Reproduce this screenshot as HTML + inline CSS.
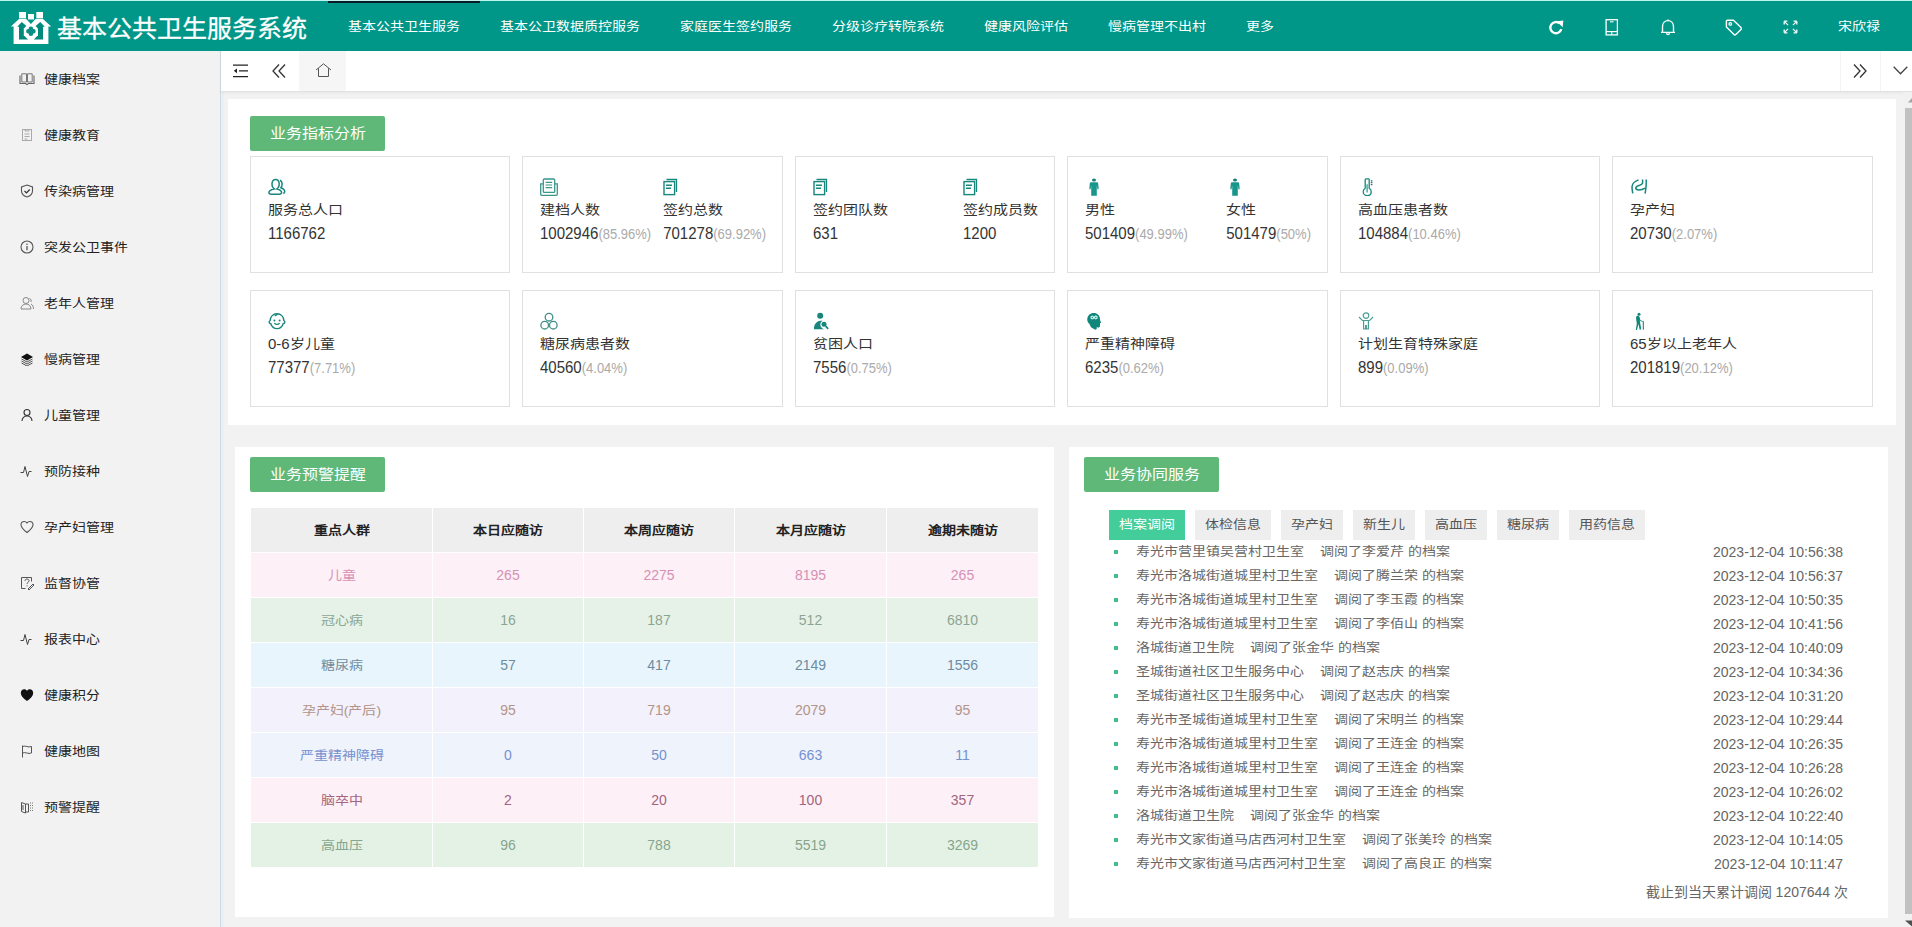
<!DOCTYPE html>
<html lang="zh-CN">
<head>
<meta charset="utf-8">
<style>
*{margin:0;padding:0;box-sizing:border-box}
html,body{width:1912px;height:927px;overflow:hidden;background:#f2f2f2;font-family:"Liberation Sans",sans-serif;color:#333}
.abs{position:absolute}
#hdr{position:absolute;left:0;top:0;width:1912px;height:51px;background:#009688;border-top:1px solid #bff5f0}
#hdr .logo{position:absolute;left:11px;top:9px}
#hdr .title{position:absolute;left:57px;top:11px;font-size:25px;line-height:32px;color:#fff;white-space:nowrap;-webkit-text-stroke:0.3px #fff}
#hdr .nav{position:absolute;left:328px;top:0;height:50px;white-space:nowrap;font-size:14px;color:#fff}
#hdr .nav span{display:inline-block;padding:0 20px;line-height:52px;height:50px;position:relative}
#hdr .nav span.act:before{content:"";position:absolute;left:0;right:0;top:0;height:2px;background:#0a1a25}
#hdr .name{position:absolute;left:1838px;top:16px;font-size:14px;line-height:20px;color:#fff}
#side{position:absolute;left:0;top:51px;width:221px;height:876px;background:#f2f2f2;border-right:1px solid #cfd9de;box-shadow:3px 0 0 #e7f1f7}
#side .it{position:absolute;left:0;width:220px;height:20px;font-size:14px;line-height:20px;color:#222}
#side .it svg{position:absolute;left:20px;top:3px}
#side .it b{position:absolute;left:44px;top:1px;font-weight:normal}
#tabs{position:absolute;left:221px;top:51px;width:1691px;height:41px;background:#fff;border-bottom:1px solid #e2e2e2;box-shadow:0 1px 3px rgba(0,0,0,.05)}
.panel{position:absolute;background:#fff}
.badge{position:absolute;width:135px;height:35px;background:#5fb878;color:#fff;font-size:16px;line-height:35px;text-align:center;border-radius:2px;white-space:nowrap}
.card{position:absolute;width:260px;height:117px;border:1px solid #e0e0e0;background:#fff}
.card .row{position:absolute;left:17px;right:16px;top:21px;display:flex;justify-content:space-between}
.card .col{white-space:nowrap}
.card .ico{height:19px;position:relative}
.card .lbl{font-size:15px;line-height:20px;margin-top:3px;color:#333}
.card .val{font-size:15px;line-height:20px;margin-top:3px;color:#333;transform:translateY(1px) scaleY(1.12);transform-origin:0 65%}
.card .val small{font-size:13px;color:#aaa}
table.t{position:absolute;border-collapse:collapse;table-layout:fixed}
table.t td,table.t th{border:1px solid #fff;text-align:center;font-size:14px;height:45px}
table.t th{background:#eee;color:#222;font-weight:bold;height:45px}
.tabs2{position:absolute;left:1109px;top:510px;white-space:nowrap;font-size:14px}
.tabs2 span{display:inline-block;height:30px;line-height:30px;padding:0 10px;background:#eee;color:#555;margin-right:10px;vertical-align:top}
.tabs2 span.on{background:#42cd9a;color:#fff}
.list{position:absolute;left:1112px;top:540px;width:732px;font-size:14px;color:#666}
.list div{position:relative;height:24px;line-height:24px;padding-left:24px;white-space:nowrap}
.list div:before{content:"";position:absolute;left:2px;top:10px;width:4px;height:4px;background:#3fbf8a}
.list div em{font-style:normal;margin-left:16px}
.list div s{text-decoration:none;position:absolute;right:1px;top:0}
.cj{display:inline-block;transform:scaleY(0.87)}
</style>
</head>
<body>
<div id="hdr">
  <svg class="logo" width="60" height="50" viewBox="0 0 60 50" style="position:absolute;left:0;top:0">
<rect x="19" y="11" width="7" height="6.4" fill="#fff"/><rect x="28" y="13" width="6" height="5.6" fill="#fff"/><rect x="36.3" y="11" width="6.7" height="6.4" fill="#fff"/>
<path d="M10.8 25.6L19 18H26.2L30.9 23L35.6 18H43L51.2 25.6H48.4V43.1H13.6V25.6Z" fill="#fff"/>
<path d="M28.4 18.8H33.4L30.9 22.4Z" fill="#009688"/>
<path d="M17.2 25.8L21.8 21.1L28 26.5V38.4H19V25.8Z" fill="#008a7c"/>
<path d="M44.8 25.8L40.2 21.1L34 26.5V38.4H43V25.8Z" fill="#008a7c"/>
<path d="M27.7 23.5H34.1L38 27.4V34.3L34.1 38.2H27.7L23.8 34.3V27.4Z" fill="#fff"/>
<path d="M30.9 27.8V32.8M28.4 30.3H33.4" stroke="#0a8f84" stroke-width="4.6" stroke-linecap="round"/>
</svg>
  <div class="title"><span class="cj" style="transform:scaleY(0.95)">基本公共卫生服务系统</span></div>
  <div class="nav"><span class="act"><i class="cj" style="font-style:normal">基本公共卫生服务</i></span><span><i class="cj" style="font-style:normal">基本公卫数据质控服务</i></span><span><i class="cj" style="font-style:normal">家庭医生签约服务</i></span><span><i class="cj" style="font-style:normal">分级诊疗转院系统</i></span><span><i class="cj" style="font-style:normal">健康风险评估</i></span><span><i class="cj" style="font-style:normal">慢病管理不出村</i></span><span><i class="cj" style="font-style:normal">更多</i></span></div>
  <div class="name"><span class="cj">宋欣禄</span></div>
<svg class="abs" style="left:1548px;top:19px" width="17" height="16" viewBox="0 0 17 16"><path d="M13.3 9.2A5.6 5.6 0 1 1 11.6 3.4" fill="none" stroke="#fff" stroke-width="2.4"/><path d="M8.6 1.2L15.4 0.6 14.6 7.2Z" fill="#fff"/></svg>
<svg class="abs" style="left:1605px;top:18px" width="14" height="17" viewBox="0 0 14 17"><rect x="1.1" y="0.7" width="11.3" height="15.2" fill="none" stroke="#fff" stroke-width="1.3"/><path d="M5 2.8h3.5" stroke="#fff" stroke-width="1.1"/><path d="M1 12.6h11.5" stroke="#fff" stroke-width="1.2"/><path d="M6.75 12.8v3" stroke="#fff" stroke-width="1.1"/></svg>
<svg class="abs" style="left:1660px;top:18px" width="16" height="17" viewBox="0 0 16 17"><path d="M2.5 13.2V7.8C2.5 4.2 4.7 1.6 8 1.6s5.5 2.6 5.5 6.2v5.4M1 13.4h14" fill="none" stroke="#fff" stroke-width="1.4"/><path d="M6.4 14.3c.3.9.9 1.3 1.6 1.3s1.3-.4 1.6-1.3" fill="none" stroke="#fff" stroke-width="1.4"/><path d="M8 0.5v1.2" stroke="#fff" stroke-width="1.4"/></svg>
<svg class="abs" style="left:1725px;top:18px" width="18" height="17" viewBox="0 0 18 17"><path d="M2.2 1.2H8.4L16 8.6C16.5 9.1 16.5 9.9 16 10.4L10.8 15.6C10.3 16.1 9.5 16.1 9 15.6L1.4 8V2C1.4 1.6 1.8 1.2 2.2 1.2Z" fill="none" stroke="#fff" stroke-width="1.4"/><circle cx="5.3" cy="4.9" r="1.3" fill="none" stroke="#fff" stroke-width="1.3"/></svg>
<svg class="abs" style="left:1783px;top:19px" width="15" height="14" viewBox="0 0 15 14"><path d="M1.8 1.8l3.3 3.3M13.2 1.8l-3.3 3.3M1.8 12.2l3.3-3.3M13.2 12.2l-3.3-3.3" stroke="#fff" stroke-width="1.2"/><path d="M1.2 1.2h3.2M1.2 1.2v3.2M13.8 1.2h-3.2M13.8 1.2v3.2M1.2 12.8h3.2M1.2 12.8v-3.2M13.8 12.8h-3.2M13.8 12.8v-3.2" stroke="#fff" stroke-width="1.3"/></svg>
</div>
<div id="side">
<div class="it" style="top:18px"><svg class="sico" width="16" height="14" viewBox="0 0 16 14" style="left:19px"><path d="M1 3.5v8h5.5l1.5 1 1.5-1H15v-8" fill="none" stroke="#666" stroke-width="1.1"/><path d="M2.8 1.8h4.7v8.2H2.8zM8.5 1.8h4.7v8.2H8.5z" fill="none" stroke="#777" stroke-width="1"/></svg><b class="cj">健康档案</b></div>
<div class="it" style="top:74px"><svg class="sico" width="14" height="14" viewBox="0 0 14 14"><rect x="2.5" y="1.5" width="9" height="11" fill="none" stroke="#aaa" stroke-width="1"/><path d="M5 1.5v1.5h4V1.5M4.5 6h5M4.5 8.5h5M4.5 11h3" stroke="#aaa" stroke-width="1" fill="none"/></svg><b class="cj">健康教育</b></div>
<div class="it" style="top:130px"><svg class="sico" width="14" height="14" viewBox="0 0 14 14"><path d="M7 1 L12.5 3 V7 C12.5 10 10 12 7 13 C4 12 1.5 10 1.5 7 V3 Z" fill="none" stroke="#555" stroke-width="1.1"/><path d="M4.5 7 L6.5 9 L9.7 5.5" fill="none" stroke="#333" stroke-width="1.2"/></svg><b class="cj">传染病管理</b></div>
<div class="it" style="top:186px"><svg class="sico" width="14" height="14" viewBox="0 0 14 14"><circle cx="7" cy="7" r="6" fill="none" stroke="#555" stroke-width="1.1"/><path d="M7 6v4.2" stroke="#555" stroke-width="1.3"/><circle cx="7" cy="4.2" r="0.8" fill="#555"/></svg><b class="cj">突发公卫事件</b></div>
<div class="it" style="top:242px"><svg class="sico" width="14" height="14" viewBox="0 0 14 14"><circle cx="6" cy="4.5" r="3" fill="none" stroke="#888" stroke-width="1"/><path d="M1 13c0-3 2.2-5 5-5s5 2 5 5z" fill="none" stroke="#888" stroke-width="1"/><path d="M9.5 2.5c1.5.5 2 2 1.5 3.5M11 8c1.5.8 2.5 2.5 2.5 5" fill="none" stroke="#888" stroke-width="1"/></svg><b class="cj">老年人管理</b></div>
<div class="it" style="top:298px"><svg class="sico" width="14" height="14" viewBox="0 0 14 14"><path d="M7 1.5 L13 5 L7 8.5 L1 5 Z" fill="#111"/><path d="M1.5 7 L7 10 L12.5 7M1.5 9 L7 12 L12.5 9M1.5 11 L7 14 L12.5 11" fill="none" stroke="#444" stroke-width="0.9"/></svg><b class="cj">慢病管理</b></div>
<div class="it" style="top:354px"><svg class="sico" width="14" height="14" viewBox="0 0 14 14"><circle cx="7" cy="4.5" r="3" fill="none" stroke="#333" stroke-width="1.1"/><path d="M2 13c0-3 2.2-5 5-5s5 2 5 5" fill="none" stroke="#333" stroke-width="1.1"/></svg><b class="cj">儿童管理</b></div>
<div class="it" style="top:410px"><svg class="sico" width="14" height="14" viewBox="0 0 14 14"><path d="M0.5 8.5h3l1.5-6 2.5 10 1.5-5h2.5" fill="none" stroke="#444" stroke-width="1"/></svg><b class="cj">预防接种</b></div>
<div class="it" style="top:466px"><svg class="sico" width="14" height="14" viewBox="0 0 14 14"><path d="M7 12.5 C3 9.5 1 7.5 1 4.8 C1 2.8 2.5 1.5 4.2 1.5 C5.5 1.5 6.5 2.3 7 3 C7.5 2.3 8.5 1.5 9.8 1.5 C11.5 1.5 13 2.8 13 4.8 C13 7.5 11 9.5 7 12.5 Z" fill="none" stroke="#555" stroke-width="1.1"/></svg><b class="cj">孕产妇管理</b></div>
<div class="it" style="top:522px"><svg class="sico" width="14" height="14" viewBox="0 0 14 14"><path d="M11.5 5.5V1.5h-10v11h4" fill="none" stroke="#555" stroke-width="1"/><path d="M5 5c0-1.2.8-2 2-2s2 .8 2 1.8c0 1.5-2 1.5-2 3" fill="none" stroke="#555" stroke-width="1"/><circle cx="7" cy="9.8" r=".6" fill="#555"/><path d="M8 13l5-5 1 1-5 5z" fill="none" stroke="#555" stroke-width="1"/></svg><b class="cj">监督协管</b></div>
<div class="it" style="top:578px"><svg class="sico" width="14" height="14" viewBox="0 0 14 14"><path d="M0.5 8.5h3l1.5-6 2.5 10 1.5-5h2.5" fill="none" stroke="#444" stroke-width="1"/></svg><b class="cj">报表中心</b></div>
<div class="it" style="top:634px"><svg class="sico" width="14" height="14" viewBox="0 0 14 14"><path d="M7 13 C3 10 0.8 8 0.8 5 C0.8 2.8 2.3 1.3 4.2 1.3 C5.5 1.3 6.5 2 7 2.8 C7.5 2 8.5 1.3 9.8 1.3 C11.7 1.3 13.2 2.8 13.2 5 C13.2 8 11 10 7 13 Z" fill="#111"/></svg><b class="cj">健康积分</b></div>
<div class="it" style="top:690px"><svg class="sico" width="14" height="14" viewBox="0 0 14 14"><path d="M2.5 13.5V1.5M2.5 2.5c3-1.5 5.5 1.5 9 0v6.5c-3.5 1.5-6-1.5-9 0" fill="none" stroke="#555" stroke-width="1"/></svg><b class="cj">健康地图</b></div>
<div class="it" style="top:746px"><svg class="sico" width="14" height="14" viewBox="0 0 14 14"><path d="M1.5 2.5l4 1.5v9l-4-1.5z M5.5 4h3v8h-3" fill="none" stroke="#555" stroke-width="1"/><path d="M3 5v5" stroke="#555" stroke-width="1"/><path d="M10.5 2.5v1M10.5 5v1M10.5 7.5v1M10.5 10v1M12.5 2.5v1M12.5 5v1M12.5 7.5v1M12.5 10v1" stroke="#777" stroke-width="1"/></svg><b class="cj">预警提醒</b></div>
</div>
<div id="tabs">
  <svg class="abs" style="left:12px;top:13px" width="15" height="14" viewBox="0 0 15 14"><path d="M0 1.2h15M6 6.8h9M0 12.6h15" stroke="#222" stroke-width="1.3"/><path d="M0.8 6.8l3.2-2.4v4.8z" fill="#222"/></svg>
  <svg class="abs" style="left:51px;top:13px" width="14" height="14" viewBox="0 0 14 14"><path d="M7 0.5L1 7l6 6.5M13 0.5L7 7l6 6.5" fill="none" stroke="#333" stroke-width="1.3"/></svg>
  <div class="abs" style="left:78px;top:0;width:47px;height:40px;background:#f6f6f6"></div>
  <svg class="abs" style="left:94px;top:12px" width="17" height="15" viewBox="0 0 17 15"><path d="M1 7L8.5 0.8 16 7M3.5 5.3V13.5h10V5.3" fill="none" stroke="#555" stroke-width="1"/></svg>
  <div class="abs" style="left:1619px;top:0;width:1px;height:40px;background:#f4f4f4"></div>
  <div class="abs" style="left:1659px;top:0;width:1px;height:40px;background:#f4f4f4"></div>
  <svg class="abs" style="left:1632px;top:13px" width="14" height="14" viewBox="0 0 14 14"><path d="M1 0.5l6 6.5-6 6.5M7 0.5l6 6.5-6 6.5" fill="none" stroke="#333" stroke-width="1.3"/></svg>
  <svg class="abs" style="left:1672px;top:15px" width="15" height="9" viewBox="0 0 15 9"><path d="M0.7 0.7L7.5 7.7 14.3 0.7" fill="none" stroke="#444" stroke-width="1.3"/></svg>
</div>
<!-- panel 1 -->
<div class="panel" style="left:228px;top:99px;width:1668px;height:326px"></div>
<div class="badge" style="left:250px;top:116px"><span class="cj">业务指标分析</span></div>
<div class="card" style="left:250px;top:156px"><div class="row"><div class="col"><div class="ico"><svg width="18" height="18" viewBox="0 0 18 18"><path d="M6.2 10.9c-.7-.6-1.2-1.2-1.5-1.9-.6-1.1-.8-2.2-.7-3.5C4.2 3.1 5.7 1.4 7.6 1.4s3.4 1.7 3.6 4.1c.1 1.3-.1 2.4-.7 3.5-.3.7-.8 1.3-1.5 1.9 2.8.7 4.6 2.1 4.6 3.6 0 1-.9 1.7-2.5 1.7H3.4c-1.6 0-2.5-.7-2.5-1.7 0-1.5 1.8-2.9 5.3-3.6z" fill="none" stroke="#17867c" stroke-width="1.5"/><path d="M12 2.2c1.3.6 2 1.9 2.1 3.5.1 1.6-.3 2.9-1.2 4 2.3.8 3.8 2.2 3.8 3.9 0 .8-.5 1.6-1.4 1.9" fill="none" stroke="#17867c" stroke-width="1.5"/></svg></div><div class="lbl"><span class="cj">服务总人口</span></div><div class="val">1166762</div></div></div></div>
<div class="card" style="left:522px;top:156px;width:261px"><div class="row"><div class="col"><div class="ico"><svg width="18" height="18" viewBox="0 0 18 18"><path d="M3 5.8H0.7v10.5c0 .6.4 1 1 1h14.6c.6 0 1-.4 1-1V5.8H15" fill="none" stroke="#3a958b" stroke-width="1.3"/><rect x="3.3" y="1" width="11.4" height="13.4" rx="1" fill="none" stroke="#3a958b" stroke-width="1.3"/><path d="M5.6 4.3h6.6M5.6 7h6.6M5.6 9.7h6.6" stroke="#3a958b" stroke-width="1.2"/></svg></div><div class="lbl"><span class="cj">建档人数</span></div><div class="val">1002946<small>(85.96%)</small></div></div><div class="col"><div class="ico"><svg width="16" height="18" viewBox="0 0 16 18"><path d="M3.5 1.5h10v12.5" fill="none" stroke="#17867c" stroke-width="1.3"/><rect x="1" y="3.6" width="10.6" height="13" fill="none" stroke="#17867c" stroke-width="1.4"/><path d="M3 7.3h6M3 10.2h5" stroke="#17867c" stroke-width="1.4"/></svg></div><div class="lbl"><span class="cj">签约总数</span></div><div class="val">701278<small>(69.92%)</small></div></div></div></div>
<div class="card" style="left:795px;top:156px"><div class="row"><div class="col"><div class="ico"><svg width="16" height="18" viewBox="0 0 16 18"><path d="M3.5 1.5h10v12.5" fill="none" stroke="#17867c" stroke-width="1.3"/><rect x="1" y="3.6" width="10.6" height="13" fill="none" stroke="#17867c" stroke-width="1.4"/><path d="M3 7.3h6M3 10.2h5" stroke="#17867c" stroke-width="1.4"/></svg></div><div class="lbl"><span class="cj">签约团队数</span></div><div class="val">631</div></div><div class="col"><div class="ico"><svg width="16" height="18" viewBox="0 0 16 18"><path d="M3.5 1.5h10v12.5" fill="none" stroke="#17867c" stroke-width="1.3"/><rect x="1" y="3.6" width="10.6" height="13" fill="none" stroke="#17867c" stroke-width="1.4"/><path d="M3 7.3h6M3 10.2h5" stroke="#17867c" stroke-width="1.4"/></svg></div><div class="lbl"><span class="cj">签约成员数</span></div><div class="val">1200</div></div></div></div>
<div class="card" style="left:1067px;top:156px;width:261px"><div class="row"><div class="col"><div class="ico"><svg width="12" height="18" viewBox="0 0 12 18" style="margin-left:3px"><ellipse cx="6" cy="1.9" rx="2" ry="1.5" fill="#138078"/><path d="M3.2 4.2h5.6c.8 0 1.3.5 1.4 1.3l.5 5.8H9.4L8.8 7.4v10.4H3.2V7.4l-.6 3.9H1.3l.5-5.8c.1-.8.6-1.3 1.4-1.3z" fill="#18968c"/></svg></div><div class="lbl"><span class="cj">男性</span></div><div class="val">501409<small>(49.99%)</small></div></div><div class="col"><div class="ico"><svg width="12" height="18" viewBox="0 0 12 18" style="margin-left:3px"><ellipse cx="6" cy="1.9" rx="2" ry="1.5" fill="#138078"/><path d="M3.2 4.2h5.6c.8 0 1.3.5 1.4 1.3l.5 5.8H9.4L8.8 7.4v10.4H3.2V7.4l-.6 3.9H1.3l.5-5.8c.1-.8.6-1.3 1.4-1.3z" fill="#18968c"/></svg></div><div class="lbl"><span class="cj">女性</span></div><div class="val">501479<small>(50%)</small></div></div></div></div>
<div class="card" style="left:1340px;top:156px"><div class="row"><div class="col"><div class="ico"><svg width="12" height="18" viewBox="0 0 12 18" style="margin-left:4px"><path d="M3.2 1.7c0-.4.3-.8.8-.8h2.4c.4 0 .8.4.8.8v8.5c1.3.8 2 2 2 3.5 0 2.3-1.8 3.9-4 3.9s-4-1.6-4-3.9c0-1.5.7-2.7 2-3.5z" fill="none" stroke="#17867c" stroke-width="1.3"/><path d="M5.1 6.2v8.3" stroke="#1a9a8f" stroke-width="1.2"/><path d="M8.8 2.8h1.6M8.8 4.7h1.6M8.8 6.6h1.6" stroke="#236d66" stroke-width="1.2"/></svg></div><div class="lbl"><span class="cj">高血压患者数</span></div><div class="val">104884<small>(10.46%)</small></div></div></div></div>
<div class="card" style="left:1612px;top:156px;width:261px"><div class="row"><div class="col"><div class="ico"><svg width="18" height="18" viewBox="0 0 18 18"><path d="M8.5 1.9C5.5 3 2.2 4.8 2 8.8c-.1 2.5.4 4.5.8 6.6" fill="none" stroke="#17867c" stroke-width="1.5"/><path d="M12.6 1.6v3.2c0 1.5-1.4 2-3 2.5-2.2.6-3.8 1.2-3.8 2.8 0 1.4 1.3 1.9 3 1.9 2.5 0 4.8-.9 6.2-1.9M16.2 1.6v4c0 3.5-.5 6.8-1.1 10.1" fill="none" stroke="#17867c" stroke-width="1.5"/></svg></div><div class="lbl"><span class="cj">孕产妇</span></div><div class="val">20730<small>(2.07%)</small></div></div></div></div>
<div class="card" style="left:250px;top:290px"><div class="row"><div class="col"><div class="ico"><svg width="18" height="18" viewBox="0 0 18 18"><path d="M9 1.8c4 0 6.6 3 6.8 6.7.9.5 1.2 1.3.9 2.1-.3.7-1 1-1.5 1.1C14.2 14.8 11.8 16.6 9 16.6s-5.2-1.8-6.2-4.9c-.6-.1-1.2-.4-1.5-1.1-.3-.8 0-1.6.9-2.1C2.4 4.8 5 1.8 9 1.8z" fill="none" stroke="#17867c" stroke-width="1.4"/><path d="M9.5 2c-.5 1-1.6 1.6-2.8 1.6" fill="none" stroke="#17867c" stroke-width="1.4"/><circle cx="6.4" cy="8.4" r="1" fill="#17867c"/><circle cx="11.6" cy="8.4" r="1" fill="#17867c"/><path d="M6.3 11.3c1.6 1.3 3.8 1.3 5.4 0" fill="none" stroke="#17867c" stroke-width="1.3"/></svg></div><div class="lbl">0-6<span class="cj">岁儿童</span></div><div class="val">77377<small>(7.71%)</small></div></div></div></div>
<div class="card" style="left:522px;top:290px;width:261px"><div class="row"><div class="col"><div class="ico"><svg width="18" height="18" viewBox="0 0 18 18"><circle cx="9" cy="5.2" r="3.8" fill="none" stroke="#3f8f88" stroke-width="1.3"/><circle cx="4.7" cy="13.2" r="3.8" fill="none" stroke="#3f8f88" stroke-width="1.3"/><circle cx="13.3" cy="13.2" r="3.8" fill="none" stroke="#3f8f88" stroke-width="1.3"/></svg></div><div class="lbl"><span class="cj">糖尿病患者数</span></div><div class="val">40560<small>(4.04%)</small></div></div></div></div>
<div class="card" style="left:795px;top:290px"><div class="row"><div class="col"><div class="ico"><svg width="18" height="18" viewBox="0 0 18 18"><circle cx="7.2" cy="3.7" r="3" fill="#17867c"/><path d="M1 17.3c0-5 2.2-8 6.2-8.6h2.6c-1.6.8-2.5 2.2-2.5 3.8 0 2.4 1.7 4.1 3.8 4.8z" fill="#17867c"/><circle cx="11" cy="12.3" r="2.5" fill="#17867c"/><path d="M12.6 14.2l2.6 2.6" stroke="#17867c" stroke-width="1.8"/></svg></div><div class="lbl"><span class="cj">贫困人口</span></div><div class="val">7556<small>(0.75%)</small></div></div></div></div>
<div class="card" style="left:1067px;top:290px;width:261px"><div class="row"><div class="col"><div class="ico"><svg width="18" height="18" viewBox="0 0 18 18"><path d="M8.7 1c3.7 0 6.3 2.7 6.3 6 0 1 .4 2.2 1.3 3.7l-1.3.6v2.6c0 1-.8 1.6-2 1.5l-1.3-.2V17l-1.5.7L6 15.3c-.5-1-1-2-1.5-3.3C3 10.8 2 9 2.3 6.8 2.7 3.4 5.2 1 8.7 1z" fill="#11877c"/><path d="M5.5 4.5l1.8-1.1 1.8 1 1.7-1.1 1.8 1.1v2l-1.8 1.1-1.7-1.1-1.8 1.1-1.8-1.1z" fill="#c9f5ef"/><circle cx="7.3" cy="5.5" r=".7" fill="#11877c"/><circle cx="10.8" cy="5.5" r=".7" fill="#11877c"/></svg></div><div class="lbl"><span class="cj">严重精神障碍</span></div><div class="val">6235<small>(0.62%)</small></div></div></div></div>
<div class="card" style="left:1340px;top:290px"><div class="row"><div class="col"><div class="ico"><svg width="16" height="18" viewBox="-1 0 16 18" style="margin-left:0px"><circle cx="7" cy="3.6" r="2.8" fill="none" stroke="#4a9e96" stroke-width="1.2"/><path d="M0 5l2.8 2.8c.5.5 1 .7 1.6.7h5.2c.6 0 1.1-.2 1.6-.7L14 5M4.6 8.6v8.4h4.8V8.6" fill="none" stroke="#4a9e96" stroke-width="1.2"/><path d="M7 13v4" stroke="#2f7d75" stroke-width="1.5"/></svg></div><div class="lbl"><span class="cj">计划生育特殊家庭</span></div><div class="val">899<small>(0.09%)</small></div></div></div></div>
<div class="card" style="left:1612px;top:290px;width:261px"><div class="row"><div class="col"><div class="ico"><svg width="14" height="18" viewBox="0 0 14 18" style="margin-left:2px"><circle cx="7" cy="2.2" r="1.5" fill="#11877c"/><path d="M4.6 4.2c1.4-.8 2.8-.3 3.1 1.2l.6 2.5 2 1 1.5-.2-.4.9-1.2.2L8.3 9l-.6-.7 1.2 6.8.3 2.4H7.6L6.4 12l-1.4 6H3.8l1-6.5-.6-4C3.9 5.7 4 4.7 4.6 4.2z" fill="#11877c"/><path d="M11.3 9.5v8.2" stroke="#1f6c66" stroke-width="1"/></svg></div><div class="lbl">65<span class="cj">岁以上老年人</span></div><div class="val">201819<small>(20.12%)</small></div></div></div></div>
<!-- panel 2 -->
<div class="panel" style="left:235px;top:447px;width:819px;height:470px"></div>
<div class="badge" style="left:250px;top:457px"><span class="cj">业务预警提醒</span></div>
<table class="t" style="left:250px;top:507px;width:789px"><colgroup><col style="width:182px"><col style="width:151px"><col style="width:151px"><col style="width:152px"><col style="width:152px"></colgroup><tr><th><span class="cj">重点人群</span></th><th><span class="cj">本日应随访</span></th><th><span class="cj">本周应随访</span></th><th><span class="cj">本月应随访</span></th><th><span class="cj">逾期未随访</span></th></tr><tr style="background:#fdf1f7;color:#d690b4"><td><span class="cj">儿童</span></td><td>265</td><td>2275</td><td>8195</td><td>265</td></tr><tr style="background:#e6f2e8;color:#8ba592"><td><span class="cj">冠心病</span></td><td>16</td><td>187</td><td>512</td><td>6810</td></tr><tr style="background:#e8f5fd;color:#6d8ca0"><td><span class="cj">糖尿病</span></td><td>57</td><td>417</td><td>2149</td><td>1556</td></tr><tr style="background:#f2f1fc;color:#b49488"><td><span class="cj">孕产妇(产后)</span></td><td>95</td><td>719</td><td>2079</td><td>95</td></tr><tr style="background:#eff3fb;color:#7591d0"><td><span class="cj">严重精神障碍</span></td><td>0</td><td>50</td><td>663</td><td>11</td></tr><tr style="background:#fdf1f7;color:#a2647e"><td><span class="cj">脑卒中</span></td><td>2</td><td>20</td><td>100</td><td>357</td></tr><tr style="background:#e4f2e6;color:#86a58c"><td><span class="cj">高血压</span></td><td>96</td><td>788</td><td>5519</td><td>3269</td></tr></table>
<!-- panel 3 -->
<div class="panel" style="left:1069px;top:447px;width:819px;height:471px"></div>
<div class="badge" style="left:1084px;top:457px"><span class="cj">业务协同服务</span></div>
<div class="tabs2"><span class="on"><i class="cj" style="font-style:normal">档案调阅</i></span><span><i class="cj" style="font-style:normal">体检信息</i></span><span><i class="cj" style="font-style:normal">孕产妇</i></span><span><i class="cj" style="font-style:normal">新生儿</i></span><span><i class="cj" style="font-style:normal">高血压</i></span><span><i class="cj" style="font-style:normal">糖尿病</i></span><span><i class="cj" style="font-style:normal">用药信息</i></span></div>
<div class="list"><div><span class="cj">寿光市营里镇吴营村卫生室</span><em class="cj">调阅了李爱芹 的档案</em><s>2023-12-04 10:56:38</s></div><div><span class="cj">寿光市洛城街道城里村卫生室</span><em class="cj">调阅了腾兰荣 的档案</em><s>2023-12-04 10:56:37</s></div><div><span class="cj">寿光市洛城街道城里村卫生室</span><em class="cj">调阅了李玉霞 的档案</em><s>2023-12-04 10:50:35</s></div><div><span class="cj">寿光市洛城街道城里村卫生室</span><em class="cj">调阅了李佰山 的档案</em><s>2023-12-04 10:41:56</s></div><div><span class="cj">洛城街道卫生院</span><em class="cj">调阅了张金华 的档案</em><s>2023-12-04 10:40:09</s></div><div><span class="cj">圣城街道社区卫生服务中心</span><em class="cj">调阅了赵志庆 的档案</em><s>2023-12-04 10:34:36</s></div><div><span class="cj">圣城街道社区卫生服务中心</span><em class="cj">调阅了赵志庆 的档案</em><s>2023-12-04 10:31:20</s></div><div><span class="cj">寿光市圣城街道城里村卫生室</span><em class="cj">调阅了宋明兰 的档案</em><s>2023-12-04 10:29:44</s></div><div><span class="cj">寿光市洛城街道城里村卫生室</span><em class="cj">调阅了王连金 的档案</em><s>2023-12-04 10:26:35</s></div><div><span class="cj">寿光市洛城街道城里村卫生室</span><em class="cj">调阅了王连金 的档案</em><s>2023-12-04 10:26:28</s></div><div><span class="cj">寿光市洛城街道城里村卫生室</span><em class="cj">调阅了王连金 的档案</em><s>2023-12-04 10:26:02</s></div><div><span class="cj">洛城街道卫生院</span><em class="cj">调阅了张金华 的档案</em><s>2023-12-04 10:22:40</s></div><div><span class="cj">寿光市文家街道马店西河村卫生室</span><em class="cj">调阅了张美玲 的档案</em><s>2023-12-04 10:14:05</s></div><div><span class="cj">寿光市文家街道马店西河村卫生室</span><em class="cj">调阅了高良正 的档案</em><s>2023-12-04 10:11:47</s></div></div>
<div class="abs" style="left:1600px;top:882px;width:248px;text-align:right;font-size:14px;line-height:20px;color:#666;white-space:nowrap">截止到当天累计调阅 1207644 次</div>
<div class="abs" style="left:1903px;top:92px;width:9px;height:835px;background:#f1f1f1"></div>
<div class="abs" style="left:1905px;top:108px;width:7px;height:806px;background:#c1c1c1"></div>
<svg class="abs" style="left:1904px;top:96px" width="8" height="8" viewBox="0 0 8 8"><path d="M8 2L4 6.5H8Z" fill="#a3a3a3"/></svg>
<svg class="abs" style="left:1904px;top:918px" width="8" height="9" viewBox="0 0 8 9"><path d="M1 2.5H8V8.5Z" fill="#505050"/></svg>
</body>
</html>
